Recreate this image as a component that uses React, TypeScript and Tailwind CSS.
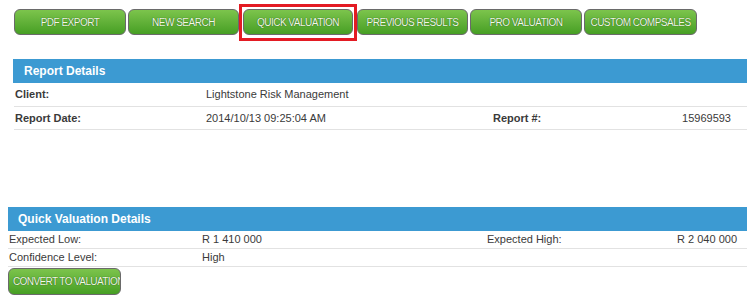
import React from "react";

const font = { fontFamily: '"Liberation Sans", Arial, sans-serif' };

function GreenButton({
  label,
  className = "",
}: {
  label: string;
  className?: string;
}) {
  return (
    <button
      className={
        "h-[26px] shrink-0 rounded-[6px] border border-[#6a6a6a] bg-gradient-to-b from-[#7cc44c] to-[#469f23] text-[10px] uppercase tracking-[-0.5px] text-[#f2f9e4] [text-shadow:0_0_1px_rgba(0,50,0,0.9)] flex items-center justify-center whitespace-nowrap " +
        className
      }
    >
      {label}
    </button>
  );
}

export default function App() {
  return (
    <div
      className="w-[747px] h-[296px] overflow-hidden bg-white text-[#3a3a3a]"
      style={font}
    >
      {/* Top button bar */}
      <div className="flex pt-[9px] pl-[14px]">
        <GreenButton label="PDF EXPORT" className="w-[112px]" />
        <GreenButton label="NEW SEARCH" className="w-[111px] ml-[2px]" />
        <div className="relative ml-[4px]">
          <GreenButton label="QUICK VALUATION" className="w-[110px]" />
          <div className="pointer-events-none absolute -left-[4px] -top-[5px] -right-[4px] -bottom-[6px] border-[3px] border-[#e31b23]" />
        </div>
        <GreenButton label="PREVIOUS RESULTS" className="w-[111px] ml-[4px]" />
        <GreenButton label="PRO VALUATION" className="w-[112px] ml-[2px]" />
        <GreenButton label="CUSTOM COMPSALES" className="w-[113px] ml-[2px]" />
      </div>

      {/* Report Details */}
      <div className="mt-[24px] ml-[13px]">
        <div className="h-[24px] bg-[#3c9ad2] flex items-center pl-[11px] text-[12px] font-bold text-white">
          Report Details
        </div>
        <div className="ml-[1px] text-[11px]">
          <div className="flex h-[24px] items-center border-b border-[#e2e2e2]">
            <div className="w-[192px] pl-[1px] font-bold">Client:</div>
            <div>Lightstone Risk Management</div>
          </div>
          <div className="flex h-[23px] items-center border-b border-[#e2e2e2]">
            <div className="w-[192px] pl-[1px] font-bold">Report Date:</div>
            <div className="w-[287px]">2014/10/13 09:25:04 AM</div>
            <div className="w-[150px] font-bold">Report #:</div>
            <div className="w-[88px] text-right">15969593</div>
          </div>
        </div>
      </div>

      {/* Quick Valuation Details */}
      <div className="mt-[77px] ml-[8px]">
        <div className="h-[24px] bg-[#3c9ad2] flex items-center pl-[10px] text-[12px] font-bold text-white">
          Quick Valuation Details
        </div>
        <div className="text-[11px]">
          <div className="flex h-[18px] items-center border-b border-[#e2e2e2]">
            <div className="w-[194px] pl-[1px]">Expected Low:</div>
            <div className="w-[285px]">R 1 410 000</div>
            <div className="w-[150px]">Expected High:</div>
            <div className="w-[100px] text-right">R 2 040 000</div>
          </div>
          <div className="flex h-[18px] items-center border-b border-[#e2e2e2]">
            <div className="w-[194px] pl-[1px]">Confidence Level:</div>
            <div>High</div>
          </div>
        </div>
        <button className="mt-[1px] h-[27px] w-[113px] overflow-hidden rounded-[6px] border border-[#6a6a6a] bg-gradient-to-b from-[#7cc44c] to-[#469f23] pl-[4px] text-left text-[10px] uppercase tracking-[-0.6px] text-[#f2f9e4] whitespace-nowrap [text-shadow:0_0_1px_rgba(0,50,0,0.9)]">
          CONVERT TO VALUATION
        </button>
      </div>
    </div>
  );
}
